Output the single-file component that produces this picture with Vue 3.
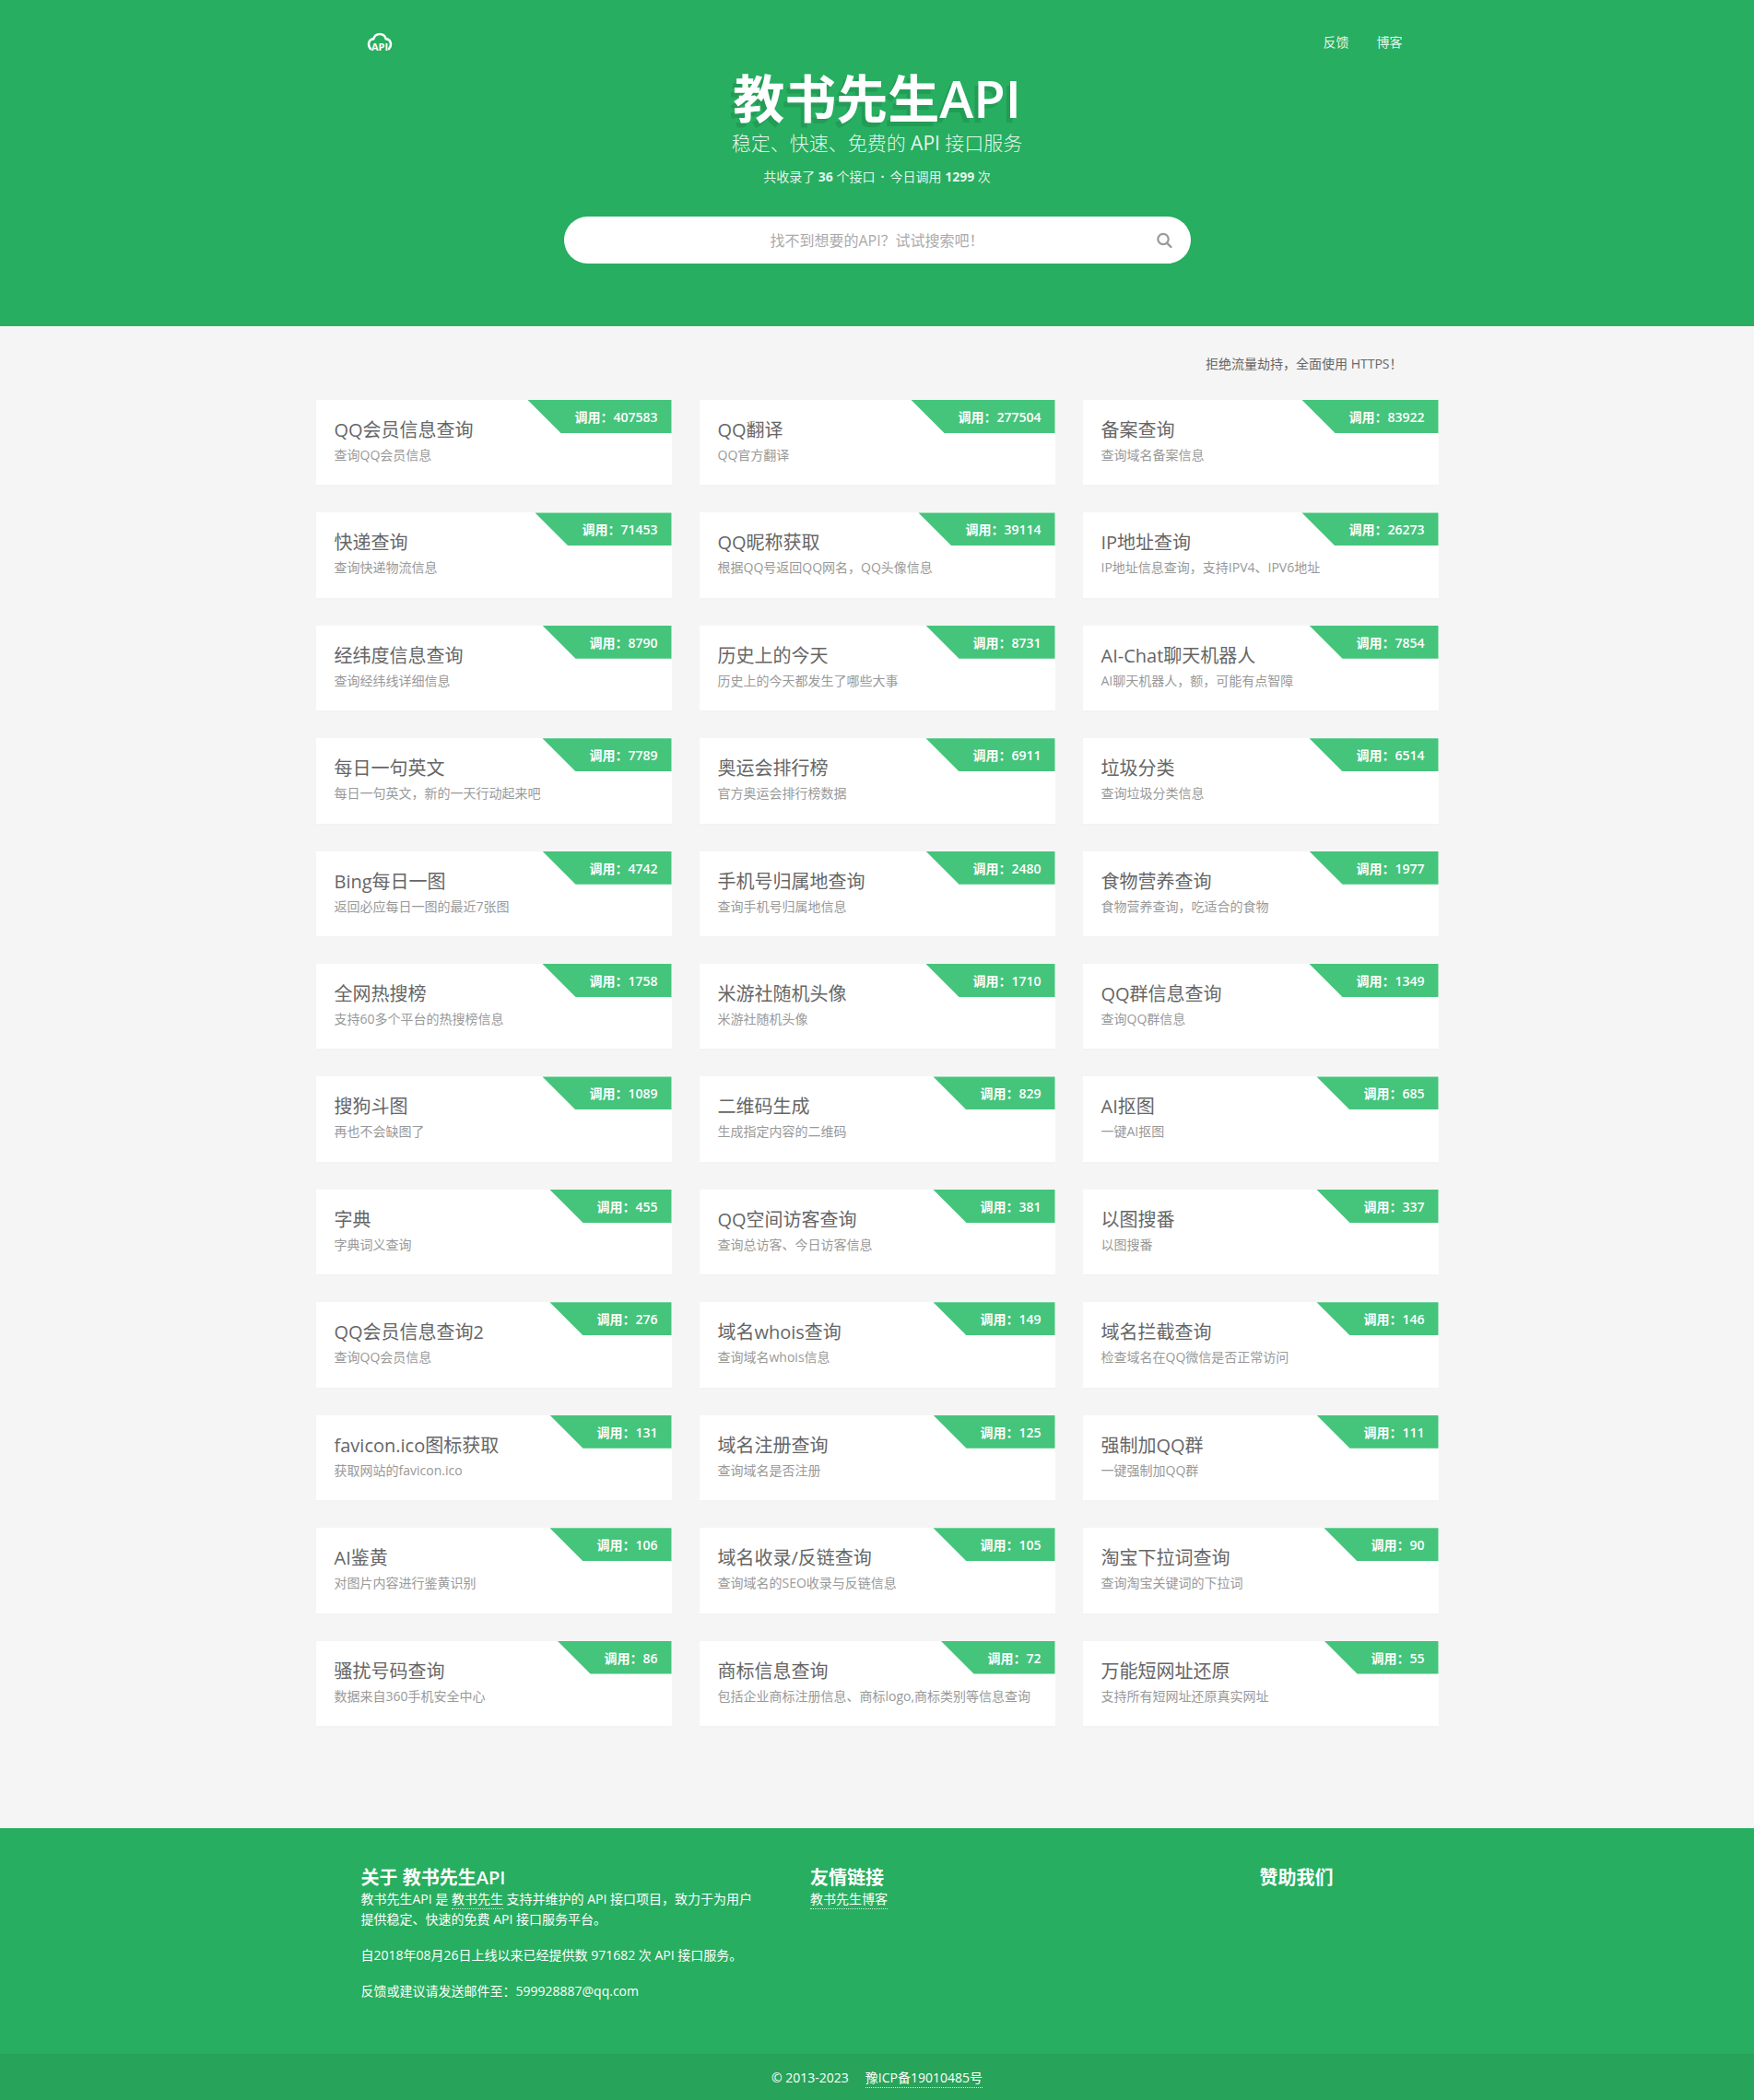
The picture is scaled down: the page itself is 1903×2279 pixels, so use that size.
<script setup>
import { ref } from 'vue'

const keyword = ref('')

const apis = [
  ['QQ会员信息查询', '查询QQ会员信息', 407583],
  ['QQ翻译', 'QQ官方翻译', 277504],
  ['备案查询', '查询域名备案信息', 83922],
  ['快递查询', '查询快递物流信息', 71453],
  ['QQ昵称获取', '根据QQ号返回QQ网名，QQ头像信息', 39114],
  ['IP地址查询', 'IP地址信息查询，支持IPV4、IPV6地址', 26273],
  ['经纬度信息查询', '查询经纬线详细信息', 8790],
  ['历史上的今天', '历史上的今天都发生了哪些大事', 8731],
  ['AI-Chat聊天机器人', 'AI聊天机器人，额，可能有点智障', 7854],
  ['每日一句英文', '每日一句英文，新的一天行动起来吧', 7789],
  ['奥运会排行榜', '官方奥运会排行榜数据', 6911],
  ['垃圾分类', '查询垃圾分类信息', 6514],
  ['Bing每日一图', '返回必应每日一图的最近7张图', 4742],
  ['手机号归属地查询', '查询手机号归属地信息', 2480],
  ['食物营养查询', '食物营养查询，吃适合的食物', 1977],
  ['全网热搜榜', '支持60多个平台的热搜榜信息', 1758],
  ['米游社随机头像', '米游社随机头像', 1710],
  ['QQ群信息查询', '查询QQ群信息', 1349],
  ['搜狗斗图', '再也不会缺图了', 1089],
  ['二维码生成', '生成指定内容的二维码', 829],
  ['AI抠图', '一键AI抠图', 685],
  ['字典', '字典词义查询', 455],
  ['QQ空间访客查询', '查询总访客、今日访客信息', 381],
  ['以图搜番', '以图搜番', 337],
  ['QQ会员信息查询2', '查询QQ会员信息', 276],
  ['域名whois查询', '查询域名whois信息', 149],
  ['域名拦截查询', '检查域名在QQ微信是否正常访问', 146],
  ['favicon.ico图标获取', '获取网站的favicon.ico', 131],
  ['域名注册查询', '查询域名是否注册', 125],
  ['强制加QQ群', '一键强制加QQ群', 111],
  ['AI鉴黄', '对图片内容进行鉴黄识别', 106],
  ['域名收录/反链查询', '查询域名的SEO收录与反链信息', 105],
  ['淘宝下拉词查询', '查询淘宝关键词的下拉词', 90],
  ['骚扰号码查询', '数据来自360手机安全中心', 86],
  ['商标信息查询', '包括企业商标注册信息、商标logo,商标类别等信息查询', 72],
  ['万能短网址还原', '支持所有短网址还原真实网址', 55],
].map(([name, desc, calls]) => ({ name, desc, calls }))
</script>

<template>
  <div class="page">
    <header class="hero">
      <nav class="nav">
        <a class="logo" href="#" aria-label="首页">
          <svg width="28" height="22" viewBox="0 0 28 22" aria-hidden="true">
            <path
              d="M4 18C2.400 16.600 2 14.900 2 13c0-3.200 2.200-5.600 5.300-5.900C8.200 4.100 10.700 2 14 2s5.800 2.100 6.700 5.100C23.800 7.400 26 9.800 26 13c0 1.900-.4 3.600-2 5"
              fill="none" stroke="#fff" stroke-width="2.600" stroke-linecap="round" stroke-linejoin="round"
            />
            <text x="14" y="20" text-anchor="middle" class="logo-text">API</text>
          </svg>
        </a>
        <div class="nav-links">
          <a href="#">反馈</a>
          <a href="#">博客</a>
        </div>
      </nav>
      <h1>教书先生API</h1>
      <p class="tagline">稳定、快速、免费的 <span>API</span> 接口服务</p>
      <p class="stats">共收录了 <b>36</b> 个接口<b class="dot">·</b>今日调用 <b>1299</b> 次</p>
      <form class="search" @submit.prevent>
        <input v-model="keyword" type="text" aria-label="搜索API" placeholder="找不到想要的API？试试搜索吧！" />
        <button type="submit" aria-label="搜索">
          <svg width="18" height="18" viewBox="0 0 18 18" aria-hidden="true">
            <circle cx="8" cy="7.500" r="5.700" fill="none" stroke="#999" stroke-width="2.200" />
            <path d="M12.200 11.800l4.200 4.200" stroke="#999" stroke-width="2.400" stroke-linecap="round" />
          </svg>
        </button>
      </form>
    </header>

    <main class="content">
      <p class="notice">拒绝流量劫持，全面使用 HTTPS！</p>
      <div class="grid">
        <a v-for="api in apis" :key="api.name" class="card" href="#">
          <span class="calls">调用：{{ api.calls }}</span>
          <h2>{{ api.name }}</h2>
          <p>{{ api.desc }}</p>
        </a>
      </div>
    </main>

    <footer>
      <div class="footer-cols">
        <section>
          <h3>关于 教书先生API</h3>
          <p>教书先生API 是 <a href="#">教书先生</a> 支持并维护的 API 接口项目，致力于为用户提供稳定、快速的免费 API 接口服务平台。</p>
          <p>自2018年08月26日上线以来已经提供数 971682 次 API 接口服务。</p>
          <p>反馈或建议请发送邮件至：599928887@qq.com</p>
        </section>
        <section>
          <h3>友情链接</h3>
          <p><a href="#">教书先生博客</a></p>
        </section>
        <section>
          <h3>赞助我们</h3>
        </section>
      </div>
      <div class="copyright">© 2013-2023<a href="#">豫ICP备19010485号</a></div>
    </footer>
  </div>
</template>

<style>
body {
  margin: 0;
  background: #f5f5f5;
}
</style>

<style scoped>
.page {
  font-family: "Open Sans", "Noto Sans CJK SC", sans-serif;
  font-size: 14px;
  line-height: 22px;
  color: #666;
}
h1, h2, h3, p {
  margin: 0;
}
a {
  color: inherit;
  text-decoration: none;
}
.hero {
  display: flex;
  flex-direction: column;
  align-items: center;
  padding-bottom: 68px;
  background: #27ae60;
  color: #fff;
  text-align: center;
}
.nav {
  display: flex;
  justify-content: space-between;
  align-items: center;
  box-sizing: border-box;
  width: 100%;
  max-width: 1140px;
  height: 71px;
  padding: 21px 0 0 16px;
}
.logo svg {
  display: block;
}
.logo-text {
  fill: #fff;
  font-size: 11px;
  font-weight: 700;
}
.nav-links {
  display: flex;
  gap: 30px;
  color: rgba(255, 255, 255, 0.9);
}
h1 {
  font-size: 56px;
  line-height: 70px;
  font-weight: 600;
  text-shadow: -4px 5px 0 rgba(0, 0, 0, 0.1);
}
.tagline {
  font-size: 21px;
  line-height: 28px;
  font-weight: 300;
  color: rgba(255, 255, 255, 0.9);
}
.tagline span {
  font-weight: 400;
}
.stats {
  margin-top: 12px;
  color: rgba(255, 255, 255, 0.9);
}
.stats b {
  font-weight: 700;
}
.stats .dot {
  padding: 0 6px;
}
.search {
  display: flex;
  box-sizing: border-box;
  width: 680px;
  max-width: 100%;
  height: 51px;
  margin-top: 32px;
  padding-left: 57px;
  border-radius: 26px;
  background: #fff;
}
.search input {
  flex: 1;
  min-width: 0;
  padding: 0;
  border: 0;
  background: none;
  outline: 0;
  font: inherit;
  font-size: 16px;
  text-align: center;
  color: #666;
}
.search input::placeholder {
  color: #aaa;
  opacity: 1;
}
.search button {
  display: grid;
  place-items: center;
  width: 57px;
  padding: 0;
  border: 0;
  background: none;
}
.content {
  max-width: 1218px;
  margin: 0 auto;
  padding: 30px 0 111px;
}
.notice {
  padding-right: 39px;
  text-align: right;
}
.grid {
  display: grid;
  grid-template-columns: repeat(3, 1fr);
  gap: 30px;
  min-height: 1439px;
  margin-top: 28px;
}
.card {
  position: relative;
  padding: 18px 20px 20px;
  background: #fff;
  box-shadow: 0 2px 2px rgba(0, 0, 0, 0.01);
}
.card h2 {
  font-size: 20px;
  line-height: 30px;
  font-weight: 400;
}
.card p {
  margin-top: 1px;
  color: #999;
}
.calls {
  position: absolute;
  top: 0;
  right: 0;
  padding: 2px 15px 0 51px;
  background: #45c47c;
  clip-path: polygon(0 0, 100% 0, 100% 100%, 36px 100%);
  color: #fff;
  font-weight: 600;
  line-height: 34px;
}
footer {
  background: #27ae60;
  color: #fff;
}
.footer-cols {
  display: grid;
  grid-template-columns: 5fr 5fr 2fr;
  max-width: 1170px;
  min-height: 245px;
  box-sizing: border-box;
  margin: 0 auto;
  padding: 41px 0;
}
.footer-cols section {
  padding: 0 35px 0 25px;
}
h3 {
  font-size: 20px;
  line-height: 25px;
  font-weight: 600;
}
.footer-cols p + p {
  margin-top: 17px;
}
footer a {
  padding-bottom: 1px;
  border-bottom: 1px dotted rgba(255, 255, 255, 0.8);
}
.copyright {
  padding-top: 2px;
  background: #28a35a;
  text-align: center;
  line-height: 48px;
}
.copyright a {
  margin-left: 18px;
}
</style>
